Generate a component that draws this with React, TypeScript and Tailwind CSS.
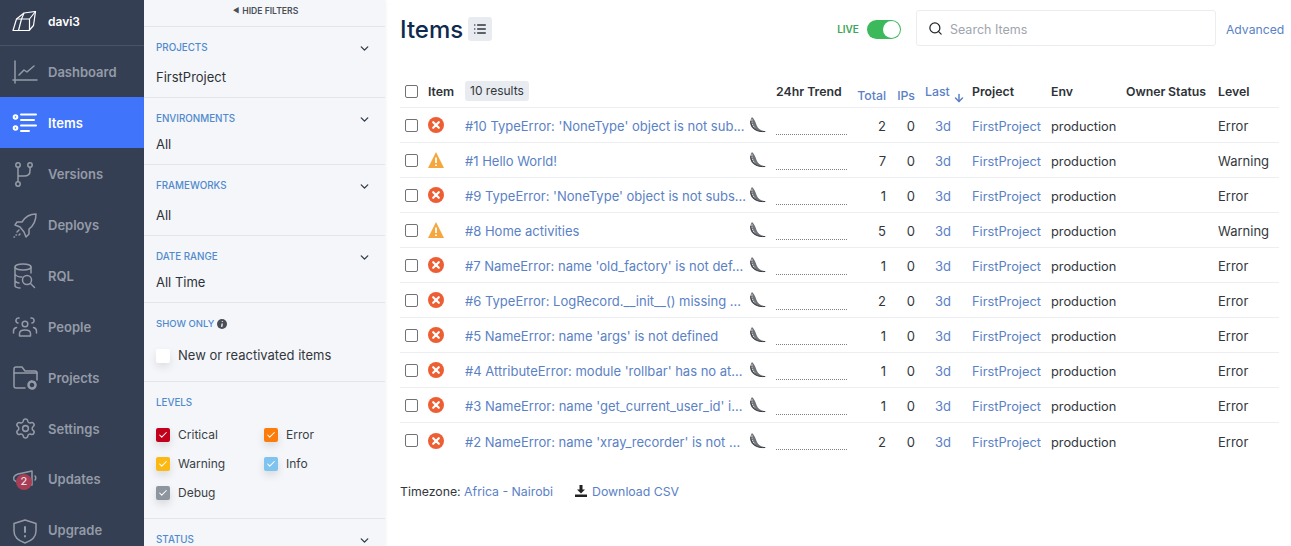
import { ReactNode } from "react";
import { ChevronDown, Check, List, Search, ArrowDown, Settings } from "lucide-react";

const COLS =
  "grid grid-cols-[28px_37px_283px_28px_74px_36px_29px_57px_79px_75px_42px_50px_61px] items-center";

type Row = { title: string; level: "Error" | "Warning"; total: number };

const rows: Row[] = [
  { title: "#10 TypeError: 'NoneType' object is not sub...", level: "Error", total: 2 },
  { title: "#1 Hello World!", level: "Warning", total: 7 },
  { title: "#9 TypeError: 'NoneType' object is not subs...", level: "Error", total: 1 },
  { title: "#8 Home activities", level: "Warning", total: 5 },
  { title: "#7 NameError: name 'old_factory' is not def...", level: "Error", total: 1 },
  { title: "#6 TypeError: LogRecord.__init__() missing ...", level: "Error", total: 2 },
  { title: "#5 NameError: name 'args' is not defined", level: "Error", total: 1 },
  { title: "#4 AttributeError: module 'rollbar' has no at...", level: "Error", total: 1 },
  { title: "#3 NameError: name 'get_current_user_id' i...", level: "Error", total: 1 },
  { title: "#2 NameError: name 'xray_recorder' is not ...", level: "Error", total: 2 },
];

function NavSvg({ children }: { children: ReactNode }) {
  return (
    <svg
      width="26"
      height="26"
      viewBox="0 0 26 26"
      fill="none"
      stroke="currentColor"
      strokeWidth="1.5"
      strokeLinecap="round"
      strokeLinejoin="round"
    >
      {children}
    </svg>
  );
}

const navItems: { label: string; icon: ReactNode; active?: boolean; flush?: boolean }[] = [
  {
    label: "Dashboard",
    icon: (
      <NavSvg>
        <path d="M3 2v22M1 21h24" />
        <path d="M7 16l5-5 3 2 7-6" />
      </NavSvg>
    ),
  },
  {
    label: "Items",
    active: true,
    icon: (
      <NavSvg>
        <circle cx="3.5" cy="7" r="1.8" strokeWidth="2" />
        <circle cx="3.5" cy="18" r="1.8" strokeWidth="2" />
        <path d="M9 4.5h15M9 10h13M9 15.5h15M9 21h8" strokeWidth="2" />
      </NavSvg>
    ),
  },
  {
    label: "Versions",
    icon: (
      <NavSvg>
        <circle cx="6" cy="4" r="2.2" />
        <circle cx="18" cy="4" r="2.2" />
        <circle cx="6" cy="23" r="2.2" />
        <path d="M6 6.5v14M6 15h6c4 0 6-2 6-5V6.5" />
      </NavSvg>
    ),
  },
  {
    label: "Deploys",
    icon: (
      <NavSvg>
        <path d="M24 2c-6 0-11 3-14 8H5l-2 3 5 2 4 5 2 5 3-3v-5c4-3 7-9 7-15z" />
        <path d="M7 18l-2 2M4 23h.5M7 23l1-1M2 25h.5" />
      </NavSvg>
    ),
  },
  {
    label: "RQL",
    icon: (
      <NavSvg>
        <ellipse cx="11" cy="4" rx="8" ry="3" />
        <path d="M3 4v19c0 1 3 2 5 2M19 4v6M3 11c1 2 4 3 7 3M3 18c1 1 2 2 4 2" />
        <circle cx="15" cy="17" r="4.5" />
        <path d="M18.5 20.5l4 4" />
      </NavSvg>
    ),
  },
  {
    label: "People",
    icon: (
      <NavSvg>
        <circle cx="13" cy="10" r="2.8" />
        <path d="M7.5 22v-2.5c0-2 2-3.5 5.5-3.5s5.5 1.5 5.5 3.5V22z" />
        <path d="M6 9a2.500 2.500 0 0 1 1-5M20 9a2.500 2.500 0 0 0-1-5M1.500 19v-2c0-2 1-3 3-3.500M24.500 19v-2c0-2-1-3-3-3.500" />
      </NavSvg>
    ),
  },
  {
    label: "Projects",
    icon: (
      <NavSvg>
        <path d="M13 23H4a2 2 0 0 1-2-2V4a2 2 0 0 1 2-2h6l3 4h10a2 2 0 0 1 2 2v7" />
        <path d="M2 8h23" />
        <circle cx="20" cy="20" r="3.500" strokeWidth="2.500" strokeDasharray="2 .6" />
      </NavSvg>
    ),
  },
  {
    label: "Settings",
    icon: (
      <span className="flex h-[26px] w-[26px] items-center justify-center">
        <Settings size={23} strokeWidth={1.6} />
      </span>
    ),
  },
  {
    label: "Updates",
    flush: true,
    icon: (
      <NavSvg>
        <path d="M20 4L6 7c-4 1-5 4-4 6 1 1 3 3 6 3l12 2z" />
        <path d="M23 9c1 1 1 3 0 4" />
      </NavSvg>
    ),
  },
  {
    label: "Upgrade",
    flush: true,
    icon: (
      <NavSvg>
        <path d="M13 2l11 3.500V13c0 6-5 10-11 12C7 23 2 19 2 13V5.500z" />
        <path d="M13 9v5M13 18v.500" strokeWidth="2" />
      </NavSvg>
    ),
  },
];

function Logo() {
  return (
    <svg width="25" height="21" viewBox="0 0 25 21" fill="none" stroke="white" strokeWidth="1.2" strokeLinejoin="round">
      <path d="M1 19.500L4.500 8L12 2L23.500 .5L21.500 14.500L17 19.500Z" />
      <path d="M4.500 8H17.500V19.500M17.500 8L23.500 .5M9.500 8L6.500 19.500M12 2L9.500 8" />
    </svg>
  );
}

function FilterBlock({ label, value, className }: { label: string; value?: string; className: string }) {
  return (
    <div className={`border-b border-[#e3e5e9] pl-3 pr-[14px] ${className}`}>
      <div className="flex items-center justify-between">
        <span className="text-[9.800px] font-medium uppercase text-[#4f8ace]">{label}</span>
        <ChevronDown size={13} strokeWidth={2.5} className="text-[#333c48]" />
      </div>
      {value && <div className="text-[13px] text-[#2e3238]">{value}</div>}
    </div>
  );
}

function LevelBox({ label, color }: { label: string; color: string }) {
  return (
    <div className="flex h-[29px] items-center gap-2">
      <span className={`flex h-[14px] w-[14px] items-center justify-center rounded-[2px] shadow-[0_4px_8px_rgba(0,0,0,0.12)] ${color}`}>
        <Check size={10} strokeWidth={2.5} className="text-white" />
      </span>
      <span className="text-xs text-[#3a3f46]">{label}</span>
    </div>
  );
}

function ErrorIcon() {
  return (
    <svg width="16" height="16" viewBox="0 0 16 16">
      <circle cx="8" cy="8" r="8" fill="#ee5e33" />
      <path d="M5.200 5.200l5.600 5.600M10.800 5.200l-5.600 5.600" stroke="white" strokeWidth="2.200" strokeLinecap="round" />
    </svg>
  );
}

function WarningIcon() {
  return (
    <svg width="16" height="16" viewBox="0 0 16 16">
      <path d="M8 0L16 16H0z" fill="#f5a63c" />
      <path d="M8 5.500v5.500M8 12.500v1.500" stroke="white" strokeWidth="1.800" />
    </svg>
  );
}

// flask logo in the row, a hatched crescent
function Flask() {
  return (
    <svg width="18" height="16" viewBox="0 0 18 16" fill="none">
      <path d="M3 0C1 3 .5 6.500 2.500 10C5 13.500 11 15.500 17.500 14.500C12 13.800 9 12 7.500 8C6.500 5 5.500 2 3 0Z" fill="#6f7277" />
      <path d="M3 2.500C2.500 5.500 3.500 8.500 6 10.800" stroke="#e4e5e7" strokeWidth="1.500" strokeDasharray="1 1.200" />
      <path d="M1.800 4C1.500 7 3 10.500 6 12.500C9 14.500 13 14.800 16 14.500" stroke="#303338" strokeWidth=".9" />
    </svg>
  );
}

function CheckBox() {
  return <span className="block h-[13px] w-[13px] rounded-[2px] border border-[#6f7276] bg-white" />;
}

export default function App() {
  return (
    <div className="flex h-[546px] w-[1291px] overflow-hidden bg-white font-['Inter',sans-serif] text-[13px] text-[#33373c]">
      <aside className="w-[144px] shrink-0 bg-[#353f53] text-[#949ba7]">
        <div className="flex h-[46px] items-center gap-[11px] border-b border-[#4a5366] pb-[2px] pl-3 text-xs font-semibold text-white">
          <Logo />
          <span>davi3</span>
        </div>
        {navItems.map((item) => (
          <div
            key={item.label}
            className={`flex h-[51px] items-center gap-[10px] pl-3 text-[13px] font-semibold ${
              item.active ? "bg-[#3f74fb] text-white" : ""
            }`}
          >
            <span className="relative flex">
              {item.icon}
              {item.label === "Updates" && (
                <span className="absolute left-[4px] top-[7px] flex h-[16px] w-[16px] items-center justify-center rounded-full bg-[#a83e55] text-[11px] font-medium text-[#e6dfe3]">
                  2
                </span>
              )}
            </span>
            <span className={item.flush ? "" : "pt-[2px]"}>{item.label}</span>
          </div>
        ))}
      </aside>

      <section className="w-[241px] shrink-0 bg-[#f5f6f9] shadow-[1px_0_3px_rgba(0,0,0,0.05)]">
        <div className="flex h-[27px] items-center justify-center gap-[3px] border-b border-[#e3e5e9] pb-[4px] pl-[2px] text-[8.600px] font-semibold text-[#4a4f57]">
          <span className="text-[7px]">◀</span>
          <span>HIDE FILTERS</span>
        </div>
        <FilterBlock label="Projects" value="FirstProject" className="flex h-[71px] flex-col gap-[12px] pt-[14px]" />
        <FilterBlock label="Environments" value="All" className="flex h-[67px] flex-col gap-[8px] pt-[14px]" />
        <FilterBlock label="Frameworks" value="All" className="flex h-[71px] flex-col gap-[12px] pt-[14px]" />
        <FilterBlock label="Date Range" value="All Time" className="flex h-[67px] flex-col gap-[8px] pt-[14px]" />

        <div className="h-[79px] border-b border-[#e3e5e9] pl-3 pt-[14px]">
          <div className="flex items-center gap-[3px] text-[9.500px] font-medium text-[#4f8ace]">
            SHOW ONLY
            <svg width="10" height="10" viewBox="0 0 10 10">
              <circle cx="5" cy="5" r="5" fill="#4a4f57" />
              <path d="M5.200 4.500L4.700 7.800M5.400 2.300v.8" stroke="white" strokeWidth="1.300" />
            </svg>
          </div>
          <div className="mt-[15px] flex items-center gap-2">
            <span className="h-[14px] w-[14px] rounded-[2px] bg-white shadow-[0_4px_8px_rgba(0,0,0,0.1)]" />
            <span className="text-[13px] text-[#33373c]">New or reactivated items</span>
          </div>
        </div>

        <div className="h-[137px] border-b border-[#e3e5e9] pl-3 pt-[14px]">
          <div className="text-[9.800px] font-medium text-[#4f8ace]">LEVELS</div>
          <div className="mt-[10px] grid grid-cols-[108px_1fr]">
            <LevelBox label="Critical" color="bg-[#c2001b]" />
            <LevelBox label="Error" color="bg-[#fb7c0a]" />
            <LevelBox label="Warning" color="bg-[#fdb913]" />
            <LevelBox label="Info" color="bg-[#7fc4ee]" />
            <LevelBox label="Debug" color="bg-[#8d959f]" />
          </div>
        </div>

        <div className="flex items-center justify-between pl-3 pr-[14px] pt-[14px]">
          <span className="text-[9.800px] font-medium text-[#4f8ace]">STATUS</span>
          <ChevronDown size={13} strokeWidth={2.5} className="text-[#333c48]" />
        </div>
      </section>

      <main className="flex-1 pl-[15px]">
        <div className="flex h-[58px] items-center">
          <h1 className="pt-[2px] text-[24px] font-medium leading-none text-[#0f2a4f]">Items</h1>
          <span className="ml-[5px] flex h-[24px] w-[24px] items-center justify-center rounded-[3px] bg-[#e8ebf0]">
            <List size={14} strokeWidth={2.5} className="text-[#2f343b]" />
          </span>
          <span className="ml-[345px] text-[10px] font-semibold text-[#3ba456]">LIVE</span>
          <span className="ml-[8px] flex h-[19px] w-[34px] items-center justify-end rounded-full bg-[#3cb95b] pr-[1px]">
            <span className="h-[17px] w-[17px] rounded-full bg-white" />
          </span>
          <div className="mb-[2px] ml-[15px] flex h-[36px] w-[300px] items-center gap-[7px] rounded-[3px] border border-[#ebedf0] pl-[11px]">
            <Search size={15} strokeWidth={2} className="text-[#22262b]" />
            <span className="pt-[4px] text-[12.500px] text-[#a0a5ae]">Search Items</span>
          </div>
          <span className="ml-[10px] pt-[2px] text-[12.200px] text-[#5a81c6]">Advanced</span>
        </div>

        <div className="mt-[17px] w-[879px]">
          <div className={`${COLS} h-[33px] border-b border-[#eceef1] text-[12.300px] font-semibold text-[#2e3238]`}>
            <span className="pl-[5px]">
              <CheckBox />
            </span>
            <span className="pt-[2px]">Item</span>
            <span className="col-span-2">
              <span className="inline-block h-[20px] rounded-[3px] bg-[#e8ebf0] px-[5px] text-xs font-normal leading-[20px] text-[#33373c]">
                10 results
              </span>
            </span>
            <span className="pt-[2px]">24hr Trend</span>
            <span className="pt-[11px] text-right font-medium text-[#5a81c6]">Total</span>
            <span className="pt-[11px] text-right font-medium text-[#5a81c6]">IPs</span>
            <span className="flex items-start pl-[10px] pt-[4px] font-medium text-[#5a81c6]">
              Last
              <ArrowDown size={12} strokeWidth={3} className="ml-[3px] mt-[9px]" />
            </span>
            <span className="pt-[2px]">Project</span>
            <span className="pt-[2px]">Env</span>
            <span className="pt-[2px]">Owner</span>
            <span className="pt-[2px]">Status</span>
            <span className="pt-[2px]">Level</span>
          </div>
          {rows.map((row) => (
            <div key={row.title} className={`${COLS} h-[35px] border-b border-[#eceef1] text-[13px] last:border-b-0`}>
              <span className="pl-[5px]">
                <CheckBox />
              </span>
              <span className="flex">{row.level === "Error" ? <ErrorIcon /> : <WarningIcon />}</span>
              <span className="whitespace-nowrap pt-[4px] text-[#5a81c6]">{row.title}</span>
              <span className="flex pl-[1px]">
                <Flask />
              </span>
              <span className="h-[19px] w-[71px] self-center border-b border-dotted border-[#7c8087]" />
              <span className="pt-[4px] text-right">{row.total}</span>
              <span className="pt-[4px] text-right">0</span>
              <span className="pl-[20px] pt-[4px] text-[#5a81c6]">3d</span>
              <span className="pt-[4px] text-[12.800px] text-[#5a81c6]">FirstProject</span>
              <span className="pt-[4px] text-[12.800px]">production</span>
              <span />
              <span />
              <span className="pt-[4px]">{row.level}</span>
            </div>
          ))}
        </div>

        <div className="mt-[25px] flex items-center text-[12.300px]">
          <span>Timezone:&nbsp;</span>
          <span className="text-[#5a81c6]">Africa - Nairobi</span>
          <svg width="12" height="12" viewBox="0 0 12 12" className="mb-[3px] ml-[22px] fill-[#222]">
            <path d="M4.500 0h3v4.500H10L6 8.500 2 4.500h2.500zM0 9.500h12V12H0z" />
          </svg>
          <span className="ml-[5px] text-[#5a81c6]">Download CSV</span>
        </div>
      </main>
    </div>
  );
}
